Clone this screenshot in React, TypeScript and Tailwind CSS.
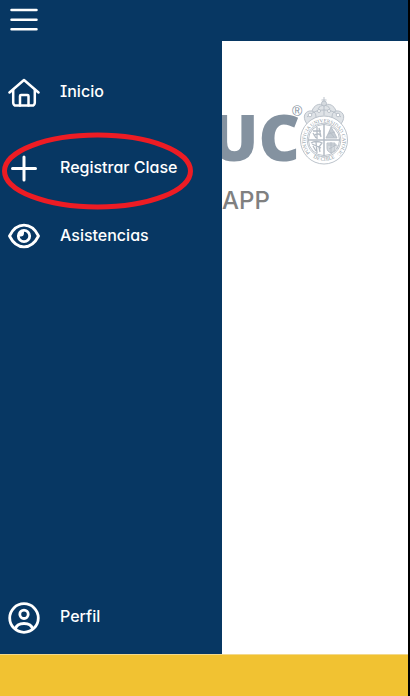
import type { ReactNode } from "react";

const fontClasses =
  "font-['Inter','Liberation_Sans',sans-serif] [font-feature-settings:'cv11','cv08']";

function Icon({ children }: { children: ReactNode }) {
  return (
    <svg
      viewBox="0 0 32 32"
      className="size-8 shrink-0"
      fill="none"
      stroke="currentColor"
      strokeWidth="2.5"
      strokeLinecap="round"
      strokeLinejoin="round"
      aria-hidden="true"
    >
      {children}
    </svg>
  );
}

function HomeIcon() {
  return (
    <Icon>
      <path d="M1.5 15.5 16 3 30.5 15.5" />
      <path d="M5.2 13v12.8a2.8 2.8 0 0 0 2.8 2.8h16a2.8 2.8 0 0 0 2.8-2.8V13" />
      <path d="M12 28.5V19a1 1 0 0 1 1-1h6.5a1 1 0 0 1 1 1v9.5" />
    </Icon>
  );
}

function PlusIcon() {
  return (
    <Icon>
      <path d="M16 4v23M4.5 15.5h23" strokeWidth="3" />
    </Icon>
  );
}

function EyeIcon() {
  return (
    <Icon>
      <path
        d="M1.5 15C5 8 10 4.2 16 4.2S27 8 30.5 15C27 22 22 25.8 16 25.8S5 22 1.5 15Z"
        strokeWidth="2.8"
      />
      <circle cx="16" cy="15" r="5.7" strokeWidth="2.8" />
      <path
        d="M16 9.5V12a3.5 3.5 0 0 1-3.5 3.5h-2A5.5 5.5 0 0 1 16 9.5Z"
        fill="currentColor"
        stroke="none"
      />
    </Icon>
  );
}

function ProfileIcon() {
  return (
    <Icon>
      <circle cx="16" cy="16" r="14.3" strokeWidth="2.8" />
      <circle cx="16" cy="12.3" r="4.2" strokeWidth="2.8" />
      <path d="M7.5 27c.8-4 4-5.5 8.5-5.5s7.7 1.5 8.5 5.5" strokeWidth="2.8" />
    </Icon>
  );
}

function NavItem({ icon, label }: { icon: ReactNode; label: string }) {
  return (
    <a href="#" className="flex h-8 items-center gap-5">
      {icon}
      <span className="pb-1 whitespace-nowrap">{label}</span>
    </a>
  );
}

function Seal() {
  return (
    <svg
      viewBox="0 0 48 68"
      className="-ml-0.5 h-17 w-12 shrink-0 overflow-visible"
      role="img"
      aria-label="Pontificia Universidad Catolica de Chile"
    >
      <defs>
        <path id="sealArc" d="M10 56A18.5 18.5 0 1 1 38 56" />
        <path id="sealFoot" d="M7.5 56A21.5 21.5 0 0 0 40.5 56" />
      </defs>
      <g fill="none" stroke="#b4bcc5" strokeWidth="0.9">
        <path
          fill="#dfe3e7"
          d="M7 27C1 19 6 13 12 14C14 8 19 6 24 8C29 6 34 8 36 14C42 13 47 19 41 27C31 17 17 17 7 27Z"
        />
        <path d="M24 0v7M21.5 3h5M18 12c2-5 10-5 12 0M12 14c3 1 4 3 4 6M36 14c-3 1-4 3-4 6M24 8v10M7 20c6-5 10-7 17-7s11 2 17 7" />
        <circle cx="24" cy="6.5" r="2.5" fill="#d5dadf" />
        <circle cx="10" cy="18" r="1.8" fill="#fff" />
        <circle cx="38" cy="18" r="1.8" fill="#fff" />
        <circle cx="19" cy="14" r="1.5" fill="#fff" />
        <circle cx="29" cy="14" r="1.5" fill="#fff" />
        <ellipse cx="24" cy="43" rx="23.5" ry="24" fill="#fff" />
        <circle cx="24" cy="43" r="16.8" />
        <circle cx="24" cy="43" r="15.6" />
        <path d="M24 27.5v31M8.5 43h31" strokeWidth="1.5" />
        <path d="M17 30v12M13 34h8M14 39c2-3 5-3 7 0M19 31l2 9M13 36l3 5" strokeWidth="1.3" />
        <path fill="#c5ccd3" d="M26 41l3-6 2-5 3 5 3 6zM28 37l7-2M29 34l5 6" />
        <path d="M11 46c3-2 8-2 11 0l-3 4 1 5M16 45l1 11M13 49l3 5M12 47l9 4" strokeWidth="1.3" />
        <path fill="#d5dadf" d="M27 46h8v5c0 3-2 4-4 5-2-1-4-2-4-5z" />
        <path d="M31 45v11M28 48h9v4M29 52l7-4" />
      </g>
      <g fill="#8995a1" className="font-['Liberation_Serif',serif] text-[5px]">
        <text>
          <textPath href="#sealArc">PONTIFICIA UNIVERSIDAD CATOLICA</textPath>
        </text>
        <text textAnchor="middle">
          <textPath href="#sealFoot" startOffset="50%">
            DE CHILE
          </textPath>
        </text>
      </g>
    </svg>
  );
}

export default function App() {
  return (
    <div className={`flex min-h-screen flex-col border-r-2 border-black bg-white ${fontClasses}`}>
      <header className="flex h-[41px] shrink-0 items-start bg-[#073763] px-2 pt-1 text-white">
        <button type="button" aria-label="Menu" className="size-8">
          <Icon>
            <path d="M3.5 6h25M3.5 15.7h25M3.5 25.3h25" />
          </Icon>
        </button>
      </header>

      <div className="flex flex-1">
        <nav className="relative z-10 flex w-[222px] shrink-0 flex-col bg-[#073763] px-2 pt-9 pb-5 text-base font-medium text-white">
          <NavItem icon={<HomeIcon />} label="Inicio" />
          <div className="mt-11 mb-9">
            <NavItem icon={<PlusIcon />} label="Registrar Clase" />
          </div>
          <NavItem icon={<EyeIcon />} label="Asistencias" />
          <div className="mt-auto">
            <NavItem icon={<ProfileIcon />} label="Perfil" />
          </div>
          <svg
            viewBox="0 0 192 78"
            className="pointer-events-none absolute top-[91px] left-0.5 h-[78px] w-48"
            fill="none"
            aria-hidden="true"
          >
            <ellipse cx="95.5" cy="39" rx="93" ry="36" stroke="#ed1c24" strokeWidth="5" />
          </svg>
        </nav>

        <main className="min-w-0 flex-1 pt-14">
          <div className="-ml-3 flex items-start">
            <span className="font-['Open_Sans',sans-serif] text-[64px] leading-20 font-extrabold text-[#8492a0]">
              UC
            </span>
            <span className="-ml-2 pt-1 font-['Liberation_Sans',sans-serif] text-sm leading-5 text-[#8492a0]">
              ®
            </span>
            <Seal />
          </div>
          <h1 className="mt-2 text-2xl leading-8 font-medium text-[#808080]">APP</h1>
        </main>
      </div>

      <footer className="h-[42px] shrink-0 border-t border-[#f3d98b] bg-[#f1c232]" />
    </div>
  );
}
